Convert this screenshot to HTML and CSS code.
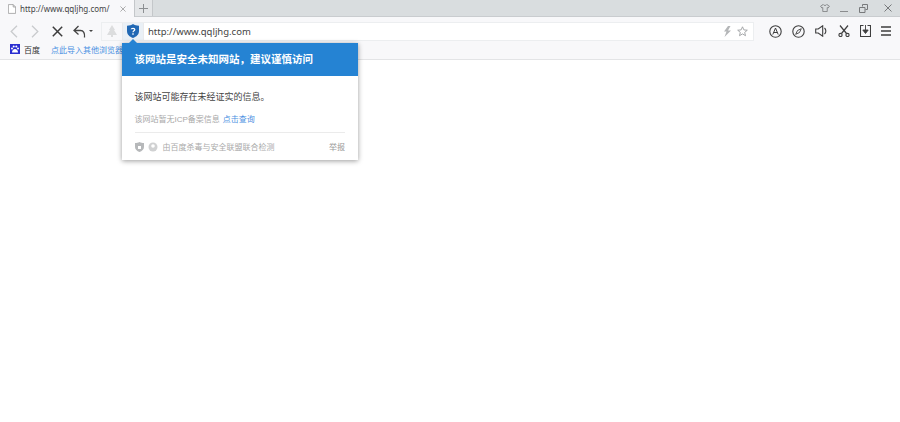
FILE: index.html
```html
<!DOCTYPE html>
<html lang="zh">
<head>
<meta charset="utf-8">
<title>http://www.qqljhg.com/</title>
<link rel="stylesheet" href="styles.css">
</head>
<body>
<header class="chrome">
  <div class="titlebar">
    <div class="tab">
      <svg class="tab-doc" width="8" height="10" viewBox="0 0 10 12"><path d="M.5.5h6l3 3v8H.5zM6.500.5v3h3" fill="#fff" stroke="#9a9a9a"/></svg>
      <span class="tab-title">http://www.qqljhg.com/</span>
      <svg class="tab-close" width="6" height="6" viewBox="0 0 7 7"><path d="M.5.5l6 6M6.500.5l-6 6" stroke="#a0a0a0" stroke-width="1"/></svg>
    </div>
    <div class="newtab"><svg width="9" height="9" viewBox="0 0 9 9"><path d="M4.500 0v9M0 4.500h9" stroke="#8c8f92"/></svg></div>
    <div class="winctl">
      <svg class="w1" width="10" height="8" viewBox="0 0 11 9"><path d="M3.500.5L.5 2.500l1.500 2 1-.5v4.500h5V4l1 .5 1.500-2-3-2c-.5 1.500-3.500 1.500-4 0z" fill="none" stroke="#77797b" stroke-width=".9"/></svg>
      <svg class="w2" width="8" height="8" viewBox="0 0 8 8"><path d="M0 7.500h8" stroke="#8a8c8e"/></svg>
      <svg class="w3" width="9" height="9" viewBox="0 0 9 9"><path d="M3.500 2.500V.5h5v5h-2M.5 3.500h5.500v5H.5z" fill="none" stroke="#77797b"/></svg>
      <svg class="w4" width="8" height="8" viewBox="0 0 8 8"><path d="M.5.500l7 7M7.500.5l-7 7" stroke="#77797b"/></svg>
    </div>
  </div>
  <div class="toolbar">
    <div class="nav">
      <svg class="nav-back" width="8" height="13" viewBox="0 0 8 13"><path d="M7 .8L1.200 6.500 7 12.200" fill="none" stroke="#c9cbcd" stroke-width="1.300"/></svg>
      <svg class="nav-fwd" width="8" height="13" viewBox="0 0 8 13"><path d="M1 .8l5.800 5.700L1 12.200" fill="none" stroke="#c9cbcd" stroke-width="1.300"/></svg>
      <svg class="nav-stop" width="11" height="11" viewBox="0 0 11 11"><path d="M.8.800l9.400 9.400M10.200.8L.8 10.200" stroke="#3c3c3c" stroke-width="1.500"/></svg>
      <svg class="nav-undo" width="13" height="13" viewBox="0 0 13 13"><path d="M5.500 1L1 5.500 5.500 9.500M1.500 5.500h6c3 0 4.500 2.500 4 7" fill="none" stroke="#444" stroke-width="1.300"/></svg>
      <span class="nav-caret"></span>
    </div>
    <div class="urlbox">
      <div class="seg seg-tree"><svg width="10" height="12" viewBox="0 0 10 12"><path d="M5 0l3 5H7l3 5H6v2H4v-2H0l3-5H2z" fill="#dcddde"/></svg></div>
      <div class="seg seg-shield"><svg width="12" height="14" viewBox="0 0 12 14"><path d="M6 0c1.500 1 3.500 1.600 6 1.700V7c0 3.500-2.500 5.700-6 7-3.500-1.300-6-3.500-6-7V1.700C2.500 1.600 4.500 1 6 0z" fill="#2168b4"/><path d="M4.200 5.300C4.300 4 7.800 3.800 7.800 5.500c0 1.300-1.800 1.300-1.800 2.800" fill="none" stroke="#fff" stroke-width="1.200"/><path d="M5.300 9.300h1.400v1.400H5.300z" fill="#fff"/></svg></div>
      <span class="url">http://www.qqljhg.com</span>
      <svg class="bolt" width="9" height="11" viewBox="0 0 9 11"><path d="M5 0L1 5.500h2.500L1.500 11 8 4.500H5L7.500 0z" fill="#b4b6b8"/></svg>
      <svg class="star" width="11" height="11" viewBox="0 0 11 11"><path d="M5.500.8l1.400 3.100 3.400.3-2.600 2.200.8 3.300-3-1.800-3 1.800.8-3.300L.7 4.200l3.400-.3z" fill="none" stroke="#9c9ea0" stroke-width=".9"/></svg>
    </div>
    <div class="tools">
      <svg width="13" height="13" viewBox="0 0 13 13"><circle cx="6.500" cy="6.500" r="5.700" fill="none" stroke="#3e3e3e" stroke-width="1.100"/><path d="M3.800 9.500l2.700-6.500 2.700 6.500M4.800 7.500h3.400" fill="none" stroke="#3e3e3e"/></svg>
      <svg width="13" height="13" viewBox="0 0 13 13"><circle cx="6.500" cy="6.500" r="5.700" fill="none" stroke="#3e3e3e" stroke-width="1.100"/><path d="M9.300 3.700L7.500 7.500 3.700 9.300 5.500 5.500z" fill="none" stroke="#3e3e3e" stroke-width=".9"/></svg>
      <svg width="13" height="12" viewBox="0 0 13 12"><path d="M.7 4h2.500L7.700.8v10.400L3.200 8H.7z" fill="none" stroke="#3e3e3e" stroke-width="1.100"/><path d="M9.500 3c1.800 1.600 1.800 4.400 0 6" fill="none" stroke="#3e3e3e" stroke-width="1.100"/></svg>
      <svg width="12" height="12" viewBox="0 0 12 12"><path d="M2 .5l6.500 8M10 .5L3.500 8.500" stroke="#3e3e3e" stroke-width="1.200"/><circle cx="2.500" cy="10" r="1.600" fill="none" stroke="#3e3e3e" stroke-width="1.100"/><circle cx="9.500" cy="10" r="1.600" fill="none" stroke="#3e3e3e" stroke-width="1.100"/></svg>
      <svg width="11" height="12" viewBox="0 0 11 12"><path d="M3.500.5H.5v11h10V.5h-3" fill="none" stroke="#3e3e3e" stroke-width="1.100"/><path d="M5.500 0v6.500M2.800 5h5.400L5.500 8.500z" fill="#3e3e3e" stroke="#3e3e3e" stroke-width=".9"/></svg>
      <svg width="10" height="10" viewBox="0 0 10 10"><path d="M0 1h10M0 5h10M0 9h10" stroke="#3e3e3e" stroke-width="1.300"/></svg>
    </div>
  </div>
  <div class="bookmarks">
    <svg class="bk-icon" width="10" height="10" viewBox="0 0 10 10"><path d="M0 0h10v10H0z" fill="#2a2ed0"/><path d="M2 8.500c0-2 1.500-3.500 3-3.500s3 1.500 3 3.500z" fill="#fff"/><circle cx="2" cy="4.500" r="1" fill="#fff"/><circle cx="8" cy="4.500" r="1" fill="#fff"/><circle cx="3.700" cy="2.500" r="1" fill="#fff"/><circle cx="6.300" cy="2.500" r="1" fill="#fff"/></svg>
    <span class="bk-name">百度</span>
    <span class="bk-import">点此导入其他浏览器</span>
  </div>
</header>

<section class="popup">
  <span class="arrow"></span>
  <h1 class="pop-head">该网站是安全未知网站，建议谨慎访问</h1>
  <div class="pop-body">
    <p class="pop-main">该网站可能存在未经证实的信息。</p>
    <p class="pop-icp">该网站暂无ICP备案信息<a class="pop-link">点击查询</a></p>
    <div class="pop-foot">
      <svg width="9" height="10" viewBox="0 0 9 10"><path d="M0 1c1.800 0 3-.4 4.500-1C6 .6 7.200 1 9 1v4c0 2.500-2 4-4.500 5C2 9 0 7.500 0 5z" fill="#b6b8ba"/><path d="M3 4h3v3H3z" fill="#fff"/></svg>
      <svg width="10" height="10" viewBox="0 0 10 10"><circle cx="5" cy="5" r="4.500" fill="#d0d1d2"/><circle cx="5" cy="4" r="1.800" fill="#fff"/></svg>
      <span class="foot-text">由百度杀毒与安全联盟联合检测</span>
      <span class="foot-report">举报</span>
    </div>
  </div>
</section>
</body>
</html>
```

FILE: styles.css
```css
* { box-sizing: border-box; }
html, body { margin: 0; padding: 0; height: 100%; background: #fff; overflow: hidden; }
body { font-family: "Liberation Sans", "Noto Sans CJK SC", sans-serif; color: #333; }

.chrome { border-bottom: 1px solid #e3e4e6; background: #f8f8fa; height: 60px; display: flex; flex-direction: column; }

.titlebar { height: 17px; background: #d9dddf; display: flex; border-bottom: 1px solid #c9cccf; flex: none; }
.tab { width: 135px; height: 17px; background: #f8f8fa; display: flex; align-items: center; padding-left: 8px; border-right: 1px solid #c4c7ca; }
.tab-title { font-family: "Noto Sans", sans-serif; font-size: 8px; margin-left: 4px; color: #444; width: 100px; white-space: nowrap; }
.tab-doc { flex: none; }
.newtab { width: 18px; height: 16px; background: #e4e6e8; border-right: 1px solid #c4c7ca; display: flex; align-items: center; justify-content: center; }
.winctl { margin-left: auto; display: flex; align-items: center; padding-right: 8px; }
.w2 { margin-left: 10px; }
.w3 { margin-left: 11px; }
.w4 { margin-left: 16px; }

.toolbar { height: 26px; padding-top: 2px; display: flex; align-items: center; flex: none; }
.nav { display: flex; align-items: center; padding-left: 10px; width: 101px; flex: none; }
.nav-fwd { margin-left: 13px; }
.nav-stop { margin-left: 13px; }
.nav-undo { margin-left: 10px; }
.nav-caret { margin-left: 3px; border: 2px solid transparent; border-top: 2px solid #444; border-bottom: 0; width: 0; height: 0; }

.urlbox { width: 653px; height: 19px; flex: none; background: #fff; border: 1px solid #eceef0; display: flex; align-items: center; padding-right: 5px; }
.seg { width: 21px; height: 17px; display: flex; align-items: center; justify-content: center; background: #f8f8fa; border-right: 1px solid #e9eaec; }
.seg-shield { background: #eaf0f6; }
.url { font-family: "Noto Sans", sans-serif; font-size: 9.500px; color: #444; margin-left: 4px; }
.bolt { margin-left: auto; }
.star { margin-left: 5px; }

.tools { display: flex; align-items: center; gap: 10px; padding-left: 15px; }

.bookmarks { height: 16px; padding-bottom: 4px; display: flex; align-items: center; padding-left: 10px; flex: none; }
.bk-name { font-size: 8px; margin-left: 4px; color: #333; }
.bk-import { font-size: 8px; margin-left: 11px; color: #4a90e2; white-space: nowrap; }

.popup { position: absolute; left: 122px; top: 43px; width: 236px; height: 117px; background: #fff; box-shadow: 0 1px 5px rgba(0,0,0,.4); }
.arrow { position: absolute; left: 7px; top: -4px; border: 4px solid transparent; border-top: 0; border-bottom-color: #2583d3; }
.pop-head { margin: 0; height: 33px; background: #2583d3; color: #fff; font-size: 10.500px; font-weight: 700; line-height: 33px; padding-left: 12.500px; white-space: nowrap; }
.pop-body { padding: 15px 13px 0 12.500px; }
.pop-main { margin: 0; font-size: 9px; line-height: 12px; color: #444; }
.pop-icp { margin: 11px 0 0; font-size: 8px; line-height: 11px; color: #a8a8a8; padding-bottom: 7px; border-bottom: 1px solid #ebebeb; }
.pop-link { color: #4a90e2; margin-left: 3px; }
.pop-foot { display: flex; align-items: center; height: 27px; font-size: 8px; color: #aaa; gap: 4px; }
.foot-text { margin-left: 1px; }
.foot-report { margin-left: auto; color: #999; }
```
